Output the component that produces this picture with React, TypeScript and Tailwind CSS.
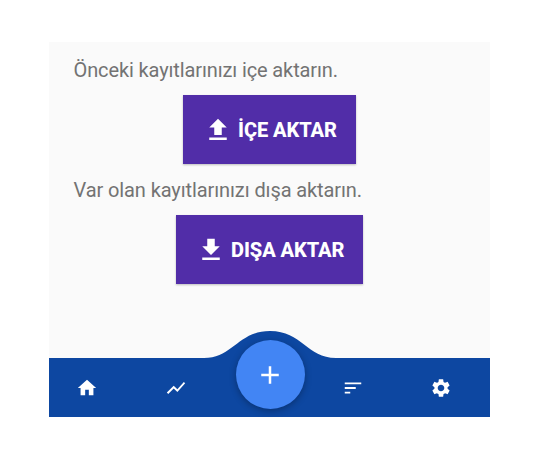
import type { ReactNode } from 'react';

function Icon({ d, className }: { d: string; className: string }) {
  return (
    <svg viewBox="0 0 24 24" fill="currentColor" className={`shrink-0 ${className}`}>
      <path d={d} />
    </svg>
  );
}

const icons = {
  upload: 'M9 16h6v-6h4l-7-7-7 7h4zm-4 2h14v2H5z',
  download: 'M19 9h-4V3H9v6H5l7 7 7-7zM5 18v2h14v-2H5z',
  home: 'M10 20v-6h4v6h5v-8h3L12 3 2 12h3v8z',
  chart: 'M3.5 18.49l6-6.01 4 4L22 6.92l-1.41-1.41-7.09 7.97-4-4L2 16.99z',
  sort: 'M3 18h6v-2H3v2zM3 6v2h18V6H3zm0 7h12v-2H3v2z',
  add: 'M19 13h-6v6h-2v-6H5v-2h6V5h2v6h6v2z',
  settings:
    'M19.14 12.94c.04-.3.06-.61.06-.94 0-.32-.02-.64-.07-.94l2.03-1.58c.18-.14.23-.41.12-.61l-1.92-3.32c-.12-.22-.37-.29-.59-.22l-2.39.96c-.5-.38-1.03-.7-1.62-.94l-.36-2.54c-.04-.24-.24-.41-.48-.41h-3.84c-.24 0-.43.17-.47.41l-.36 2.54c-.59.24-1.13.57-1.62.94l-2.39-.96c-.22-.08-.47 0-.59.22L2.74 8.87c-.12.21-.08.47.12.61l2.03 1.58c-.05.3-.09.63-.09.94s.02.64.07.94l-2.03 1.58c-.18.14-.23.41-.12.61l1.92 3.32c.12.22.37.29.59.22l2.39-.96c.5.38 1.03.7 1.62.94l.36 2.54c.05.24.24.41.48.41h3.84c.24 0 .44-.17.47-.41l.36-2.54c.59-.24 1.13-.56 1.62-.94l2.39.96c.22.08.47 0 .59-.22l1.92-3.32c.12-.22.07-.47-.12-.61l-2.01-1.58zM12 15.6c-1.98 0-3.6-1.62-3.6-3.6s1.62-3.6 3.6-3.6 3.6 1.62 3.6 3.6-1.62 3.6-3.6 3.6z',
};

function ActionButton({ icon, className, children }: { icon: string; className: string; children: ReactNode }) {
  return (
    <button
      className={`flex h-[69px] items-center self-center bg-[#512da8] pl-5 text-[20px] font-extrabold whitespace-nowrap text-white shadow-[0_1px_2px_rgba(0,0,0,0.25)] ${className}`}
    >
      <Icon d={icon} className="size-[30px]" />
      <span className="ml-[5px] tracking-[-0.06px]">{children}</span>
    </button>
  );
}

function NavItem({ icon }: { icon: string }) {
  return (
    <button className="flex items-center justify-center">
      <Icon d={icon} className="size-[22px]" />
    </button>
  );
}

export default function App() {
  return (
    <div className="flex h-[459px] w-[539px] bg-white pt-[42px] pl-[49px] font-[Roboto,sans-serif]">
      <main className="flex h-[375px] w-[441px] flex-col bg-[#fafafa] text-[20px] text-[#737373]">
        <p className="mt-[14px] ml-[24.5px] h-[28px] leading-[28px] tracking-[-0.12px] whitespace-nowrap">Önceki kayıtlarınızı içe aktarın.</p>
        <ActionButton icon={icons.upload} className="mt-[11px] w-[173px]">İÇE AKTAR</ActionButton>
        <p className="mt-[12px] ml-[24.5px] h-[28px] leading-[28px] tracking-[-0.1px] whitespace-nowrap">Var olan kayıtlarınızı dışa aktarın.</p>
        <ActionButton icon={icons.download} className="mt-[11px] w-[187px]">DIŞA AKTAR</ActionButton>
        <nav className="relative mt-auto flex h-[59px] justify-between bg-[#0d47a1] px-[27px] text-white">
          <svg viewBox="0 0 132 28" className="absolute bottom-full left-[155px] h-[28px] w-[132px] text-[#0d47a1]">
            <path fill="currentColor" d="M0 28C29 28 34 1 66 1S103 28 132 28z" />
          </svg>
          <div className="flex gap-[66.5px]">
            <NavItem icon={icons.home} />
            <NavItem icon={icons.chart} />
          </div>
          <button className="absolute -top-[17.7px] left-[186.5px] flex size-[69px] items-center justify-center rounded-full bg-[#4285f4] shadow-[0_2px_7px_rgba(0,0,0,0.3)]">
            <Icon d={icons.add} className="size-[30px]" />
          </button>
          <div className="flex gap-[66.5px] pr-[10.7px]">
            <NavItem icon={icons.sort} />
            <NavItem icon={icons.settings} />
          </div>
        </nav>
      </main>
    </div>
  );
}
